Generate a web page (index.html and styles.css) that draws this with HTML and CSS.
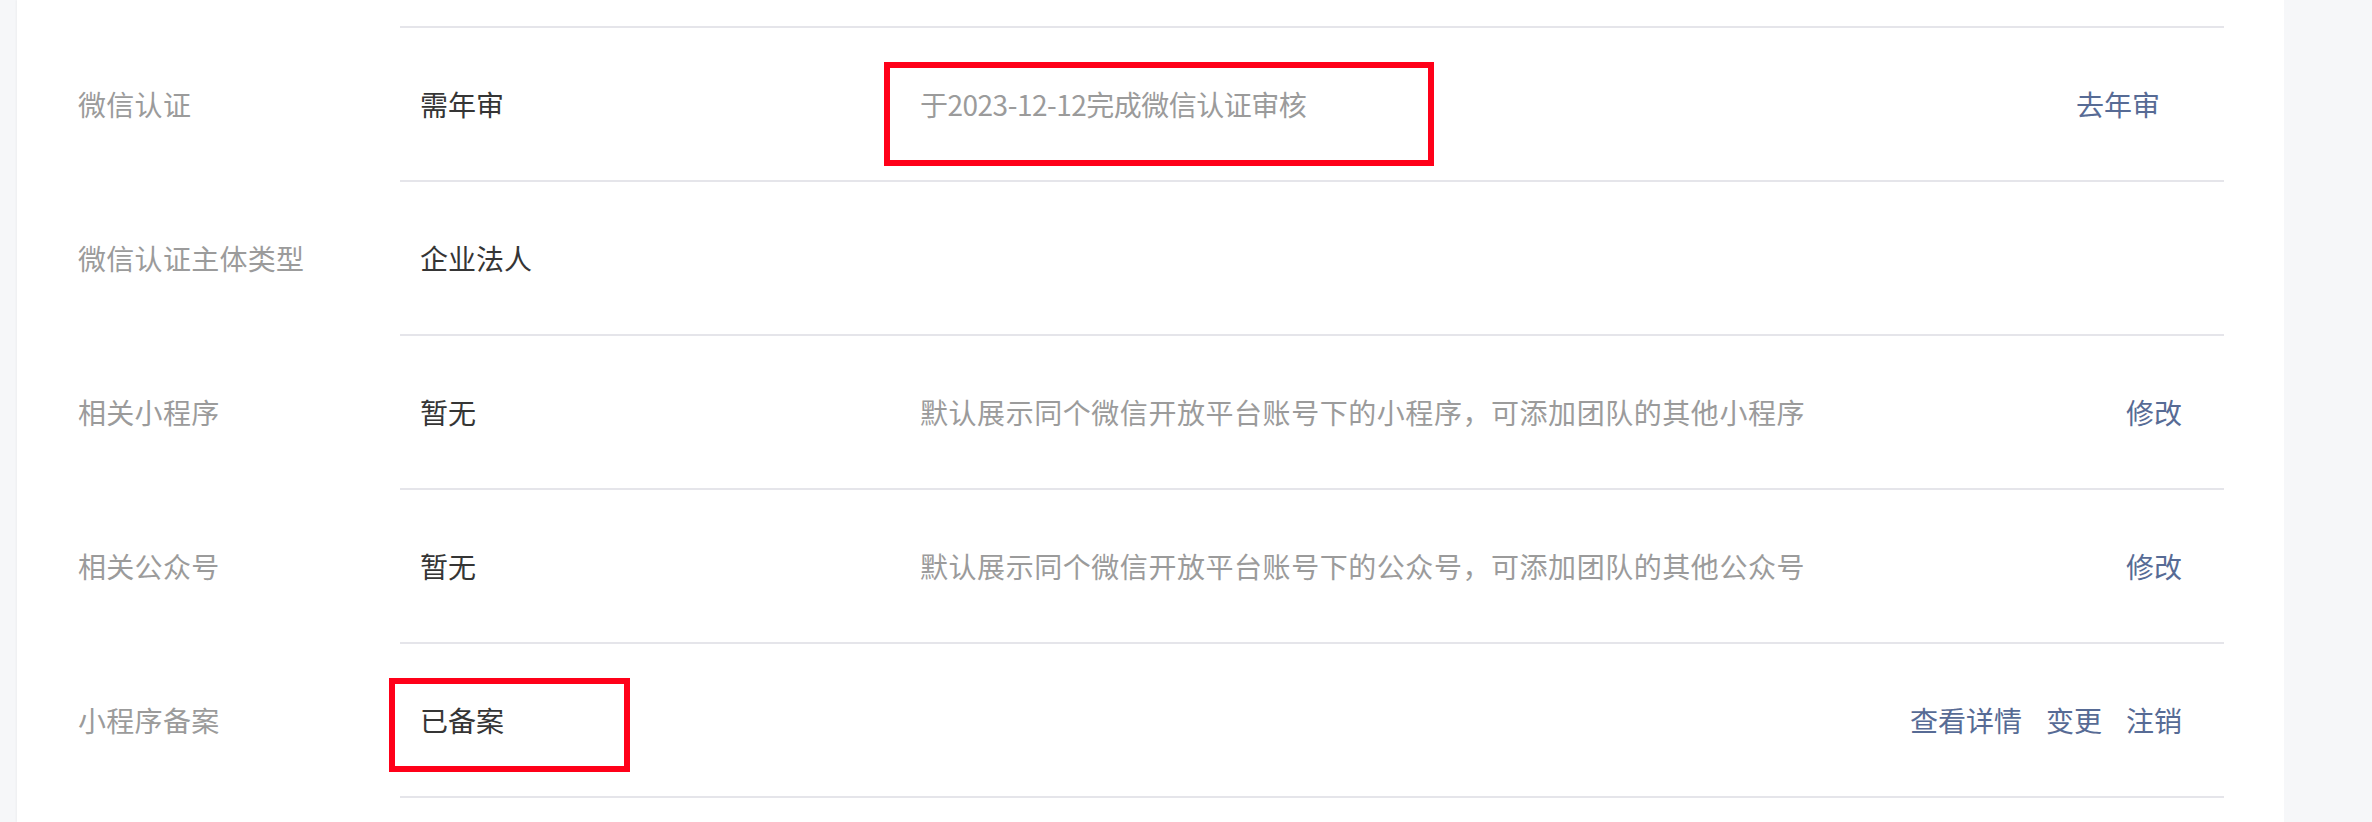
FILE: index.html
```html
<!DOCTYPE html>
<html lang="zh-CN">
<head>
<meta charset="utf-8">
<title>设置</title>
<link rel="stylesheet" href="styles.css">
</head>
<body>
<div class="page">
  <section class="panel">
    <div class="row row-top">
      <div class="label"></div>
      <div class="body"></div>
    </div>
    <div class="row">
      <div class="label">微信认证</div>
      <div class="body">
        <div class="value">需年审</div>
        <div class="desc desc-date">于2023-12-12完成微信认证审核</div>
        <div class="actions actions-pad"><a class="link">去年审</a></div>
        <span class="mark mark-desc"></span>
      </div>
    </div>
    <div class="row">
      <div class="label">微信认证主体类型</div>
      <div class="body">
        <div class="value">企业法人</div>
        <div class="desc"></div>
        <div class="actions"></div>
      </div>
    </div>
    <div class="row">
      <div class="label">相关小程序</div>
      <div class="body">
        <div class="value">暂无</div>
        <div class="desc desc-long">默认展示同个微信开放平台账号下的小程序，可添加团队的其他小程序</div>
        <div class="actions"><a class="link">修改</a></div>
      </div>
    </div>
    <div class="row">
      <div class="label">相关公众号</div>
      <div class="body">
        <div class="value">暂无</div>
        <div class="desc desc-long">默认展示同个微信开放平台账号下的公众号，可添加团队的其他公众号</div>
        <div class="actions"><a class="link">修改</a></div>
      </div>
    </div>
    <div class="row">
      <div class="label">小程序备案</div>
      <div class="body">
        <div class="value">已备案</div>
        <div class="desc"></div>
        <div class="actions"><a class="link">查看详情</a><a class="link">变更</a><a class="link">注销</a></div>
        <span class="mark mark-value"></span>
      </div>
    </div>
  </section>
</div>
</body>
</html>
```
FILE: styles.css
```css
* { box-sizing: border-box; }
html, body {
  margin: 0;
  padding: 0;
  height: 100%;
}
body {
  background: #f6f7f9;
  font-family: "Noto Sans CJK SC", "Noto Sans", sans-serif;
  font-size: 28px;
  overflow: hidden;
}
.page {
  display: flex;
  height: 822px;
  padding-left: 17px;
}
.panel {
  width: 2267px;
  background: #ffffff;
  box-shadow: -1px 0 2px rgba(0, 0, 0, 0.04);
  padding: 0 60px 0 61px;
  display: flex;
  flex-direction: column;
}
.row {
  display: flex;
  height: 154px;
  flex-shrink: 0;
}
.row-top { height: 28px; }
.label {
  width: 322px;
  flex-shrink: 0;
  display: flex;
  align-items: center;
  color: #9b9b9b;
  letter-spacing: 0.3px;
  padding-bottom: 2px;
}
.body {
  position: relative;
  flex: 1;
  display: flex;
  align-items: center;
  border-bottom: 2px solid #e5e5ea;
  padding: 0 42px 0 20px;
}
.value {
  width: 500px;
  flex-shrink: 0;
  color: #353535;
}
.desc {
  flex: 1;
  color: #9b9b9b;
}
.desc-long { letter-spacing: 0.55px; }
.desc-date { letter-spacing: -0.5px; }
.actions {
  display: flex;
  gap: 24px;
}
.actions-pad { padding-right: 22px; }
.link {
  color: #576b95;
  text-decoration: none;
  cursor: pointer;
}
.mark {
  position: absolute;
  border: 6px solid #ff0019;
  pointer-events: none;
}
.mark-desc {
  left: 484px;
  top: 34px;
  width: 550px;
  height: 104px;
}
.mark-value {
  left: -11px;
  top: 34px;
  width: 241px;
  height: 94px;
}
```
